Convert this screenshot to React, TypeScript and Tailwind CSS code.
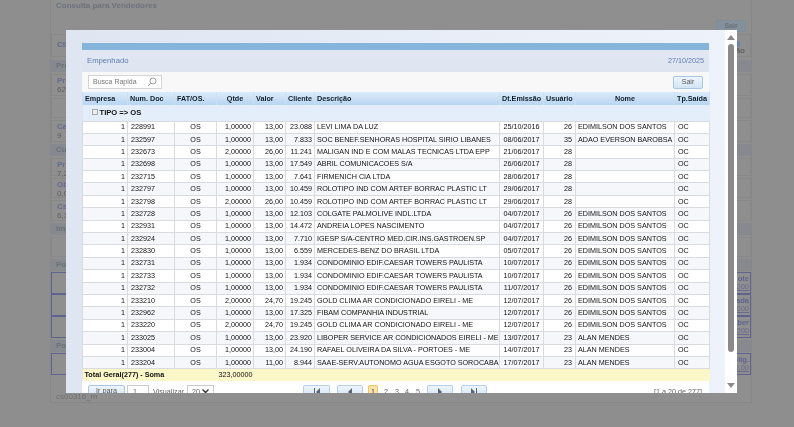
const rows = [
  ["228991", "1,00000", "13,00", "23.088", "LEVI LIMA DA LUZ", "25/10/2016", "26", "EDIMILSON DOS SANTOS"],
  ["232597", "1,00000", "13,00", "7.833", "SOC BENEF.SENHORAS HOSPITAL SIRIO LIBANES", "08/06/2017", "35", "ADAO EVERSON BAROBSA"],
  ["232673", "2,00000", "26,00", "11.241", "MALIGAN IND E COM MALAS TECNICAS LTDA EPP", "21/06/2017", "28", ""],
  ["232698", "1,00000", "13,00", "17.549", "ABRIL COMUNICACOES S/A", "26/06/2017", "28", ""],
  ["232715", "1,00000", "13,00", "7.641", "FIRMENICH CIA LTDA", "28/06/2017", "28", ""],
  ["232797", "1,00000", "13,00", "10.459", "ROLOTIPO IND COM ARTEF BORRAC PLASTIC LT", "29/06/2017", "28", ""],
  ["232798", "2,00000", "26,00", "10.459", "ROLOTIPO IND COM ARTEF BORRAC PLASTIC LT", "29/06/2017", "28", ""],
  ["232728", "1,00000", "13,00", "12.103", "COLGATE PALMOLIVE INDL.LTDA", "04/07/2017", "26", "EDIMILSON DOS SANTOS"],
  ["232931", "1,00000", "13,00", "14.472", "ANDREIA LOPES NASCIMENTO", "04/07/2017", "26", "EDIMILSON DOS SANTOS"],
  ["232924", "1,00000", "13,00", "7.710", "IGESP S/A-CENTRO MED.CIR.INS.GASTROEN.SP", "04/07/2017", "26", "EDIMILSON DOS SANTOS"],
  ["232830", "1,00000", "13,00", "6.559", "MERCEDES-BENZ DO BRASIL LTDA", "05/07/2017", "26", "EDIMILSON DOS SANTOS"],
  ["232731", "1,00000", "13,00", "1.934", "CONDOMINIO EDIF.CAESAR TOWERS PAULISTA", "10/07/2017", "26", "EDIMILSON DOS SANTOS"],
  ["232733", "1,00000", "13,00", "1.934", "CONDOMINIO EDIF.CAESAR TOWERS PAULISTA", "10/07/2017", "26", "EDIMILSON DOS SANTOS"],
  ["232732", "1,00000", "13,00", "1.934", "CONDOMINIO EDIF.CAESAR TOWERS PAULISTA", "11/07/2017", "26", "EDIMILSON DOS SANTOS"],
  ["233210", "2,00000", "24,70", "19.245", "GOLD CLIMA AR CONDICIONADO EIRELI - ME", "12/07/2017", "26", "EDIMILSON DOS SANTOS"],
  ["232962", "1,00000", "13,00", "17.325", "FIBAM COMPANHIA INDUSTRIAL", "12/07/2017", "26", "EDIMILSON DOS SANTOS"],
  ["233220", "2,00000", "24,70", "19.245", "GOLD CLIMA AR CONDICIONADO EIRELI - ME", "12/07/2017", "26", "EDIMILSON DOS SANTOS"],
  ["233025", "1,00000", "13,00", "23.920", "LIBOPER SERVICE AR CONDICIONADOS EIRELI - ME", "13/07/2017", "23", "ALAN MENDES"],
  ["233004", "1,00000", "13,00", "24.190", "RAFAEL OLIVEIRA DA SILVA - PORTOES - ME", "14/07/2017", "23", "ALAN MENDES"],
  ["233204", "1,00000", "11,00", "8.944", "SAAE-SERV.AUTONOMO AGUA ESGOTO SOROCABA", "17/07/2017", "23", "ALAN MENDES"],
];

const widths = ["w-[45px]", "w-[47px]", "w-[42px]", "w-[37px]", "w-[32px]", "w-[29px]", "w-[185px]", "w-[44px]", "w-[32px]", "w-[99px]", "w-[35px]"];
const heads = ["Empresa", "Num. Doc", "FAT/OS.", "Qtde", "Valor", "Cliente", "Descrição", "Dt.Emissão", "Usuário", "Nome", "Tp.Saída"];

const BgSection = ({ label }: { label: string }) => (
  <div className="h-[12px] bg-[#868a8f] px-[5px] text-[8px] font-bold leading-[12px] text-[#6c7079]">{label}</div>
);

const BgCard = ({ h, label, value }: { h: string; label?: string; value?: string }) => (
  <div className={`${h} border border-[#888888] px-[5px] py-[1px] text-[8px] leading-[9px]`}>
    <div className="font-bold text-[#666a90]">{label}</div>
    <div className="text-[#606060]">{value}</div>
  </div>
);

const BoxCard = ({ h, label, value }: { h: string; label: string; value: string }) => (
  <div className={`${h} flex justify-end border border-[#5f6390] px-[1px] pt-[2px] text-right text-[7.5px] leading-[8px]`}>
    <div>
      <div className="font-bold text-[#5f6390]">{label}</div>
      <div className="text-[#666a90] underline">{value}</div>
    </div>
  </div>
);

const NavButton = ({ d, w }: { d: string; w: string }) => (
  <button className={`${w} flex h-[14px] items-center justify-center rounded-[2px] border border-[#b5cfe9] bg-gradient-to-b from-[#eef5fc] to-[#cfe2f5]`}>
    <svg width="10" height="10" viewBox="0 0 10 10" fill="#5c6670">
      <path d={d} />
    </svg>
  </button>
);

export default function App() {
  return (
    <div className="relative h-[427px] w-[794px] overflow-hidden bg-[#8e8e8e] font-['Liberation_Sans',Arial,sans-serif] blur-[0.35px]">
      {/* pagina de fundo, atras do overlay */}
      <div className="ml-[50px] flex h-[403px] w-[702px] flex-col border-x border-b border-[#878787] bg-[#8f8f8f]">
        <div className="h-[20px] px-[5px] pt-[1px] text-[8px] font-bold leading-[10px] text-[#6d727a]">Consulta para Vendedores</div>
        <div className="flex h-[14px] justify-end pr-[5px]">
          <div className="h-[12px] w-[30px] rounded-[2px] border border-[#7f8d9b] bg-[#84909c] text-center text-[7px] font-bold leading-[10px] text-[#6b7178]">Sair</div>
        </div>
        <div className="mb-[3px] flex h-[23px] justify-between border border-[#888888] px-[5px] pt-[6px] text-[8px] font-bold leading-[8px] text-[#666a90]">
          <span>Cli</span>
          <span className="flex flex-col items-center text-[#606060]">
            <span className="block h-[6px] w-[6px] rounded-full bg-[#5f7fb0]" />
            Não
          </span>
        </div>
        <BgSection label="Pro" />
        <div className="mt-[2px] flex flex-col gap-[2px]">
          <BgCard h="h-[22px]" label="Pro" value="62" />
          <BgCard h="h-[20px]" />
          <BgCard h="h-[22px]" label="Ca" value="9" />
        </div>
        <div className="mt-[2px]"><BgSection label="Cu" /></div>
        <div className="mt-[2px] flex flex-col gap-[2px]">
          <BgCard h="h-[18px]" label="Pre" value="7,2" />
          <BgCard h="h-[20px]" label="Ob" value="0,0" />
          <BgCard h="h-[21px]" label="Cs" value="6,1" />
        </div>
        <div className="mt-[2px]"><BgSection label="Imp" /></div>
        <div className="mt-[2px]"><BgCard h="h-[20px]" /></div>
        <div className="mt-[2px]"><BgSection label="Po" /></div>
        <div className="mt-[1px] flex flex-col">
          <BoxCard h="h-[22px]" label="ote" value="000" />
          <BoxCard h="h-[22px]" label="ada" value="000" />
          <BoxCard h="h-[22px]" label="ber" value="000" />
        </div>
        <div className="mt-[2px]"><BgSection label="Po" /></div>
        <div className="mt-[1px]"><BoxCard h="h-[22px]" label="olig." value="0,00" /></div>
        <div className="mt-auto px-[5px] pb-[1px] text-[8px] leading-[9px] text-[#6f6f6f]">cs00316_m</div>
      </div>

      {/* modal */}
      <div className="absolute left-[66px] top-[30px] flex h-[363px] w-[671px] overflow-hidden bg-white">
        <div className="h-full w-[659px] bg-gradient-to-r from-[#dfe6f2] to-[#eef2fa] pl-[16px] pt-[13px]">
          <div className="w-[627px]">
            <div className="h-[7px] bg-[#85b5db]" />
            <div className="flex h-[22px] items-center justify-between bg-gradient-to-b from-[#e2e8f3] to-[#dde5f1] px-[5px] text-[7.2px] text-[#5d7cb5]">
              <span className="text-[7.7px]">Empenhado</span>
              <span>27/10/2025</span>
            </div>
            <div className="flex h-[20px] items-center justify-between bg-[#f8f8f8] pl-[6px] pr-[6px]">
              <div className="flex h-[14px] w-[74px] items-center justify-between border border-[#d4d4d4] bg-white px-[4px] text-[7px] text-[#777]">
                <span>Busca Rapida</span>
                <svg width="10" height="10" viewBox="0 0 10 10" fill="none" stroke="#999" strokeWidth="0.9">
                  <circle cx="6" cy="4" r="3" />
                  <path d="M3.8 6.2 1 9" />
                </svg>
              </div>
              <button className="h-[13px] w-[30px] rounded-[2px] border border-[#a9c6e3] bg-gradient-to-b from-[#eef5fc] to-[#d3e4f5] text-center text-[7px] font-medium leading-[10px] text-[#555]">Sair</button>
            </div>
            <table className="w-[627px] table-fixed border-collapse text-[7.2px] leading-[10px] text-[#111]">
              <colgroup>
                {widths.map((w) => (
                  <col key={w} className={w} />
                ))}
              </colgroup>
              <thead>
                <tr className="h-[13px] bg-gradient-to-b from-[#dcebfa] to-[#b8d5f2]">
                  {heads.map((h, i) => (
                    <th key={h} className={`overflow-hidden whitespace-nowrap border-x border-[#cddff2] px-[2px] py-0 text-[7.2px] font-bold text-[#111c28] ${i === 9 || i === 3 ? "text-center" : "text-left"}`}>
                      {h}
                    </th>
                  ))}
                </tr>
              </thead>
              <tbody>
                <tr className="h-[16px] bg-[#e4eefa]">
                  <td colSpan={11} className="px-[9px] text-[7.6px] font-bold">
                    <span className="mr-[2px] inline-block h-[6px] w-[6px] border border-[#aaa] bg-[#eee] align-[0px]" />
                    TIPO =&gt; OS
                  </td>
                </tr>
                {rows.map((r, i) => (
                  <tr key={r[0]} className={`h-[12.4px] ${i % 2 === 0 ? "bg-white" : "bg-[#f5f7fa]"}`}>
                    <td className="border border-[#d8dce1] px-[2px] py-0 text-right">1</td>
                    <td className="border border-[#d8dce1] px-[3px] py-0">{r[0]}</td>
                    <td className="border border-[#d8dce1] py-0 text-center">OS</td>
                    <td className="border border-[#d8dce1] px-[2px] py-0 text-right">{r[1]}</td>
                    <td className="border border-[#d8dce1] px-[2px] py-0 text-right">{r[2]}</td>
                    <td className="border border-[#d8dce1] px-[2px] py-0 text-right">{r[3]}</td>
                    <td className="overflow-hidden whitespace-nowrap border border-[#d8dce1] px-[2px] py-0">{r[4]}</td>
                    <td className="border border-[#d8dce1] py-0 text-center">{r[5]}</td>
                    <td className="border border-[#d8dce1] px-[3px] py-0 text-right">{r[6]}</td>
                    <td className="overflow-hidden whitespace-nowrap border border-[#d8dce1] px-[2px] py-0">{r[7]}</td>
                    <td className="border border-[#d8dce1] px-[3px] py-0">OC</td>
                  </tr>
                ))}
                <tr className="h-[12px] bg-[#fbf7c9] font-bold">
                  <td colSpan={3} className="px-[2px]">Total Geral(277) - Soma</td>
                  <td className="px-[2px] text-right font-normal">323,00000</td>
                  <td colSpan={7} />
                </tr>
              </tbody>
            </table>
            <div className="flex h-[24px] items-start bg-white pt-[4px] text-[7.2px] text-[#666]">
              <button className="ml-[6px] h-[14px] w-[37px] rounded-[2px] border border-[#a9c6e3] bg-gradient-to-b from-[#eef5fc] to-[#d3e4f5] text-[7.2px] text-[#555]">Ir para</button>
              <div className="ml-[2px] h-[14px] w-[22px] border border-[#ccc] bg-white pl-[5px] leading-[12px]">1</div>
              <span className="ml-[4px] w-[30px] whitespace-nowrap leading-[14px]">Visualizar</span>
              <div className="ml-[4px] flex h-[14px] w-[27px] justify-between border border-[#ccc] px-[4px] leading-[12px]">
                <span>20</span>
                <svg className="mt-[3px]" width="7" height="5" viewBox="0 0 7 5" fill="none" stroke="#333" strokeWidth="1.4">
                  <path d="M.5.5 3.5 3.5 6.5.5" />
                </svg>
              </div>
              <div className="ml-[89px]"><NavButton w="w-[27px]" d="M2 1h1v8H2zM8 1v8L4 5z" /></div>
              <div className="ml-[7px]"><NavButton w="w-[26px]" d="M7 1v8L3 5z" /></div>
              <span className="ml-[5px] h-[14px] w-[10px] rounded-[2px] border border-[#f0c36d] bg-[#fde3a7] text-center leading-[12px] text-[#444]">1</span>
              <span className="ml-[6px] w-[4px] leading-[14px]">2</span>
              <span className="ml-[7px] w-[4px] leading-[14px]">3</span>
              <span className="ml-[6px] w-[4px] leading-[14px]">4</span>
              <span className="ml-[7px] w-[4px] leading-[14px]">5</span>
              <div className="ml-[7px]"><NavButton w="w-[26px]" d="M3 1v8l4-4z" /></div>
              <div className="ml-[8px]"><NavButton w="w-[26px]" d="M2 1v8l4-4zM7 1h1v8H7z" /></div>
              <span className="ml-auto mr-[7px] leading-[14px]">[1 a 20 de 277]</span>
            </div>
          </div>
        </div>
        {/* barra de rolagem */}
        <div className="flex h-full w-[12px] flex-col items-center bg-white py-[5px]">
          <svg width="8" height="6" viewBox="0 0 8 6" fill="#8a8a8a">
            <path d="M4 0 8 5H0z" />
          </svg>
          <div className="mt-[3px] h-[308px] w-[6px] rounded-[3px] bg-[#8a8a8a]" />
          <svg className="mt-auto" width="8" height="6" viewBox="0 0 8 6" fill="#8a8a8a">
            <path d="M0 1h8L4 6z" />
          </svg>
        </div>
      </div>
    </div>
  );
}
